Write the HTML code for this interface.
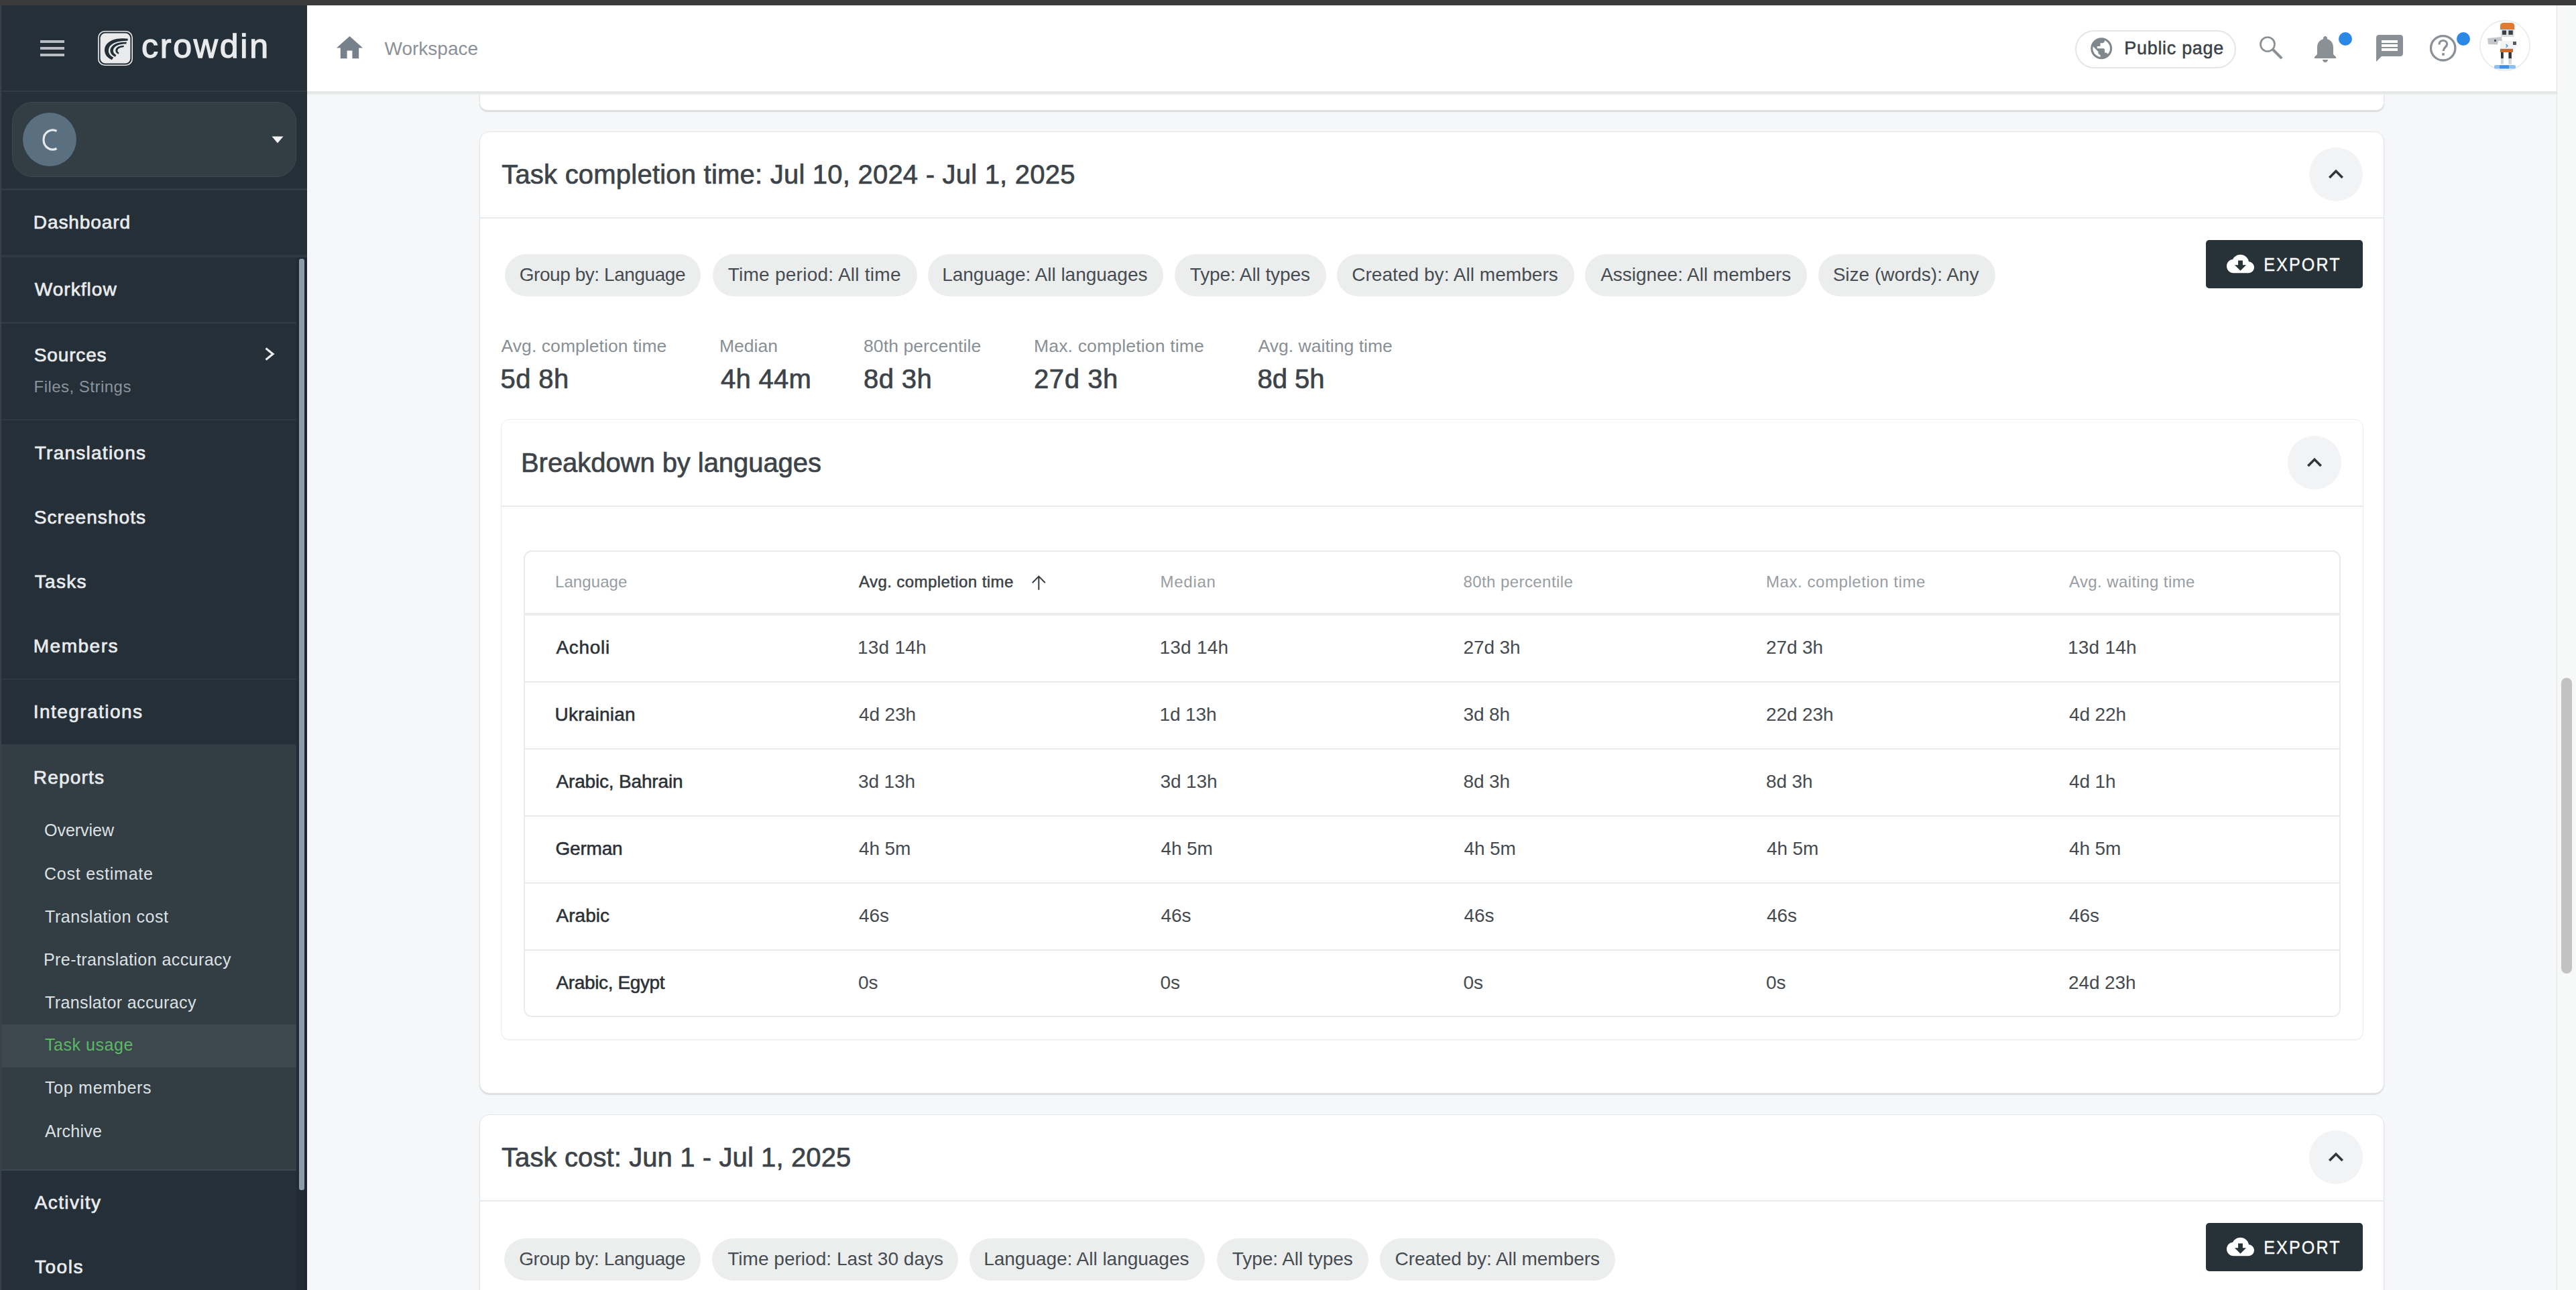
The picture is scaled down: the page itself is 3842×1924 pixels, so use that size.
<!DOCTYPE html>
<html><head><meta charset="utf-8">
<style>
html,body{margin:0;padding:0;}
body{width:3842px;height:1924px;position:relative;overflow:hidden;background:#f6f7f9;font-family:"Liberation Sans",sans-serif;}
.a{position:absolute;box-sizing:border-box;}
.t{position:absolute;white-space:pre;line-height:1;font-family:"Liberation Sans",sans-serif;}
svg{position:absolute;overflow:visible;}
.card{position:absolute;background:#fff;border:1px solid #e4e6e7;border-radius:15px;box-shadow:0 1.5px 1.5px rgba(0,0,0,0.11);box-sizing:border-box;}
.chip{position:absolute;background:#eceeee;border-radius:32px;height:63px;}
.btnc{position:absolute;width:80px;height:80px;border-radius:40px;background:#f2f3f4;}
.exp{position:absolute;left:3290px;width:234px;height:72px;border-radius:5px;background:#263238;}
.div{position:absolute;height:2px;background:#e9ebec;}
</style></head>
<body>
<!-- top dark bar -->

<div class="a" style="left:0;top:0;width:2px;height:1924px;background:#3b404a"></div>

<!-- SIDEBAR -->
<div class="a" style="left:2px;top:8px;width:456px;height:1916px;background:#242f38"></div>
<div class="a" style="left:2px;top:135px;width:456px;height:2px;background:#303b43"></div>
<!-- org selector -->
<div class="a" style="left:18px;top:152px;width:424px;height:112px;border-radius:30px;background:#323d44;border:1.5px solid #3d4a52"></div>
<div class="a" style="left:34px;top:168px;width:80px;height:80px;border-radius:40px;background:#5a6f80"></div>
<svg style="left:0;top:0" width="460" height="300"><path d="M84.5 195.5 A13.5 14.5 0 1 0 84.5 221.5" fill="none" stroke="#e6e9eb" stroke-width="3.2"/></svg>
<svg style="left:0;top:0" width="460" height="300"><path d="M405.5 203.5 L422.5 203.5 L414 213.5 Z" fill="#f4f5f6"/></svg>
<div class="a" style="left:2px;top:281px;width:456px;height:3px;background:#303b43"></div>

<!-- hamburger -->
<div class="a" style="left:60px;top:60px;width:36px;height:4px;background:#b7bdc2"></div>
<div class="a" style="left:60px;top:70px;width:36px;height:4px;background:#b7bdc2"></div>
<div class="a" style="left:60px;top:80px;width:36px;height:4px;background:#b7bdc2"></div>
<!-- crowdin logo icon -->
<svg style="left:146px;top:46px" width="52" height="52" viewBox="0 0 52 52">
  <rect x="0.8" y="0.8" width="50.4" height="50.4" rx="9.5" fill="none" stroke="#e8eaec" stroke-width="1.6"/>
  <rect x="3.6" y="3.6" width="44.8" height="44.8" rx="7.5" fill="#e8eaec"/>
  <g fill="#242f38">
    <path d="M45 11.8 C30 9.5 14 13.5 10.5 24.5 C8.3 32.5 12.5 40 21 43.2 L23.2 39.6 C17.2 37 14.8 32 16.4 26 C19 18.2 30 14.8 44.2 14.8 Z"/>
    <path d="M43 16.8 C31.5 16 21.5 19.5 18.8 26.8 C17.2 31.8 20 36.2 26 38.8 L27.4 36.1 C23.4 34.2 22.2 31 23.2 27.6 C25 22.2 32.5 19.6 42.2 19.6 Z"/>
    <path d="M39 22 C32.5 21.8 27.6 24 26.4 28 C25.7 31 27.3 33.4 30.6 34.8 L31.6 32.6 C29.6 31.6 29 30 29.5 28.5 C30.5 26 33.5 24.4 38.4 24.2 Z"/>
  </g>
</svg>
<!-- crowdin wordmark -->
<div class="t" style="left:211px;top:44px;font-size:50px;font-weight:400;color:#e8eaec;letter-spacing:2.8px;-webkit-text-stroke:1.3px #e8eaec">crowdin</div>

<!-- sidebar dividers -->
<div class="a" style="left:2px;top:380px;width:456px;height:4px;background:#2e3942"></div>
<div class="a" style="left:2px;top:480px;width:440px;height:3px;background:#2e3942"></div>
<div class="a" style="left:2px;top:625px;width:440px;height:2px;background:#2e3942"></div>
<div class="a" style="left:2px;top:1012px;width:440px;height:2px;background:#2e3942"></div>
<!-- Sources chevron -->
<svg style="left:0;top:0" width="460" height="600"><path d="M396.5 519.5 L407 528 L396.5 536.5" fill="none" stroke="#e9ebed" stroke-width="3.2"/></svg>
<!-- Reports group -->
<div class="a" style="left:2px;top:1110px;width:440px;height:635px;background:#323d44;border-top-right-radius:4px"></div>
<div class="a" style="left:2px;top:1744px;width:440px;height:2px;background:#3c484f"></div>
<div class="a" style="left:2px;top:1528px;width:440px;height:64px;background:#3c474e"></div>
<!-- sidebar scrollbar -->
<div class="a" style="left:442px;top:384px;width:16px;height:1540px;background:#222b34"></div>
<div class="a" style="left:454px;top:384px;width:4px;height:1540px;background:#1e2633"></div>
<div class="a" style="left:446px;top:386px;width:8px;height:1389px;border-radius:3px;background:#8b9cab"></div>

<!-- CARD 1 (partial) -->
<div class="card" style="left:715px;top:-40px;width:2841px;height:205px;border-radius:12px"></div>

<!-- CARD 2 -->
<div class="card" style="left:715px;top:196px;width:2841px;height:1435px"></div>
<div class="btnc" style="left:3444px;top:220px"></div>
<div class="div" style="left:716px;top:323.5px;width:2839px"></div>
<div class="exp" style="top:358px"></div>
<div class="chip" style="left:752.5px;top:378.5px;width:292.5px"></div>
<div class="chip" style="left:1062.5px;top:378.5px;width:305px"></div>
<div class="chip" style="left:1384px;top:378.5px;width:351px"></div>
<div class="chip" style="left:1751.5px;top:378.5px;width:226px"></div>
<div class="chip" style="left:1994px;top:378.5px;width:353.5px"></div>
<div class="chip" style="left:2364px;top:378.5px;width:331px"></div>
<div class="chip" style="left:2711.5px;top:378.5px;width:264.5px"></div>

<!-- breakdown card -->
<div class="card" style="left:747px;top:625px;width:2778px;height:926px;border-radius:13px;box-shadow:0 1px 1px rgba(0,0,0,0.05);border-color:#eceeee"></div>
<div class="btnc" style="left:3412px;top:650px"></div>
<div class="div" style="left:748px;top:753.5px;width:2776px"></div>
<!-- table -->
<div class="a" style="left:781px;top:821px;width:2710px;height:696px;border:2px solid #eaeced;border-radius:12px"></div>
<div class="a" style="left:783px;top:914px;width:2706px;height:4px;background:#eaeced"></div>
<div class="div" style="left:783px;top:1015.5px;width:2706px"></div>
<div class="div" style="left:783px;top:1115.5px;width:2706px"></div>
<div class="div" style="left:783px;top:1215.5px;width:2706px"></div>
<div class="div" style="left:783px;top:1315.5px;width:2706px"></div>
<div class="div" style="left:783px;top:1415.5px;width:2706px"></div>
<!-- sort arrow -->
<svg style="left:1530px;top:850px" width="40" height="40" viewBox="0 0 40 40"><path d="M19.3 9.5 V29.8 M9.8 19.2 L19.3 9.6 L28.8 19.2" fill="none" stroke="#353c42" stroke-width="2"/></svg>

<!-- CARD 3 -->
<div class="card" style="left:715px;top:1661.5px;width:2841px;height:400px"></div>
<div class="btnc" style="left:3444px;top:1686px"></div>
<div class="div" style="left:716px;top:1789.5px;width:2839px"></div>
<div class="exp" style="top:1824px"></div>
<div class="chip" style="left:752px;top:1847px;width:293px"></div>
<div class="chip" style="left:1062px;top:1847px;width:367px"></div>
<div class="chip" style="left:1446px;top:1847px;width:351px"></div>
<div class="chip" style="left:1814.5px;top:1847px;width:226.8px"></div>
<div class="chip" style="left:2058.3px;top:1847px;width:351.2px"></div>

<!-- chevrons (expand_less) -->
<svg style="left:3461.7px;top:237.5px" width="44" height="44" viewBox="0 0 24 24"><path d="M12 8l-6 6 1.41 1.41L12 10.83l4.59 4.58L18 14z" fill="#2f363b"/></svg>
<svg style="left:3430px;top:667.5px" width="44" height="44" viewBox="0 0 24 24"><path d="M12 8l-6 6 1.41 1.41L12 10.83l4.59 4.58L18 14z" fill="#2f363b"/></svg>
<svg style="left:3461.7px;top:1703.5px" width="44" height="44" viewBox="0 0 24 24"><path d="M12 8l-6 6 1.41 1.41L12 10.83l4.59 4.58L18 14z" fill="#2f363b"/></svg>
<!-- cloud download icons -->
<svg style="left:3321px;top:373.2px" width="41" height="41" viewBox="0 0 24 24"><path d="M19.35 10.04C18.67 6.59 15.64 4 12 4 9.11 4 6.6 5.64 5.35 8.04 2.34 8.36 0 10.91 0 14c0 3.31 2.69 6 6 6h13c2.76 0 5-2.24 5-5 0-2.64-2.05-4.78-4.65-4.96zM17 13l-5 5-5-5h3V9h4v4h3z" fill="#fff"/></svg>
<svg style="left:3321px;top:1839.2px" width="41" height="41" viewBox="0 0 24 24"><path d="M19.35 10.04C18.67 6.59 15.64 4 12 4 9.11 4 6.6 5.64 5.35 8.04 2.34 8.36 0 10.91 0 14c0 3.31 2.69 6 6 6h13c2.76 0 5-2.24 5-5 0-2.64-2.05-4.78-4.65-4.96zM17 13l-5 5-5-5h3V9h4v4h3z" fill="#fff"/></svg>

<!-- HEADER -->
<div class="a" style="left:458px;top:8px;width:3355px;height:128px;background:#fff"></div>
<div class="a" style="left:458px;top:136px;width:3355px;height:4px;background:#e6e8e8"></div>
<div class="a" style="left:458px;top:140px;width:3355px;height:3px;background:linear-gradient(#eef0f0,rgba(240,242,242,0))"></div>
<svg style="left:498px;top:48px" width="47" height="47" viewBox="0 0 24 24"><path d="M10 20v-6h4v6h5v-8h3L12 3 2 12h3v8z" fill="#77818b"/></svg>
<!-- public page chip -->
<div class="a" style="left:3094.5px;top:44.5px;width:240.5px;height:57px;border-radius:29px;border:2.5px solid #e4e6e8;background:#fff"></div>
<svg style="left:3114.6px;top:52.7px" width="38.4" height="38.4" viewBox="0 0 24 24"><path d="M12 2C6.48 2 2 6.48 2 12s4.48 10 10 10 10-4.48 10-10S17.52 2 12 2zm-1 17.93c-3.95-.49-7-3.85-7-7.93 0-.62.08-1.21.21-1.79L9 15v1c0 1.1.9 2 2 2v1.93zm6.9-2.54c-.26-.81-1-1.39-1.9-1.39h-1v-3c0-.55-.45-1-1-1H8v-2h2c.55 0 1-.45 1-1V7h2c1.1 0 2-.9 2-2v-.41c2.93 1.19 5 4.06 5 7.41 0 2.08-.8 3.97-2.1 5.39z" fill="#80878d"/></svg>
<!-- search -->
<svg style="left:3360px;top:44px" width="60" height="60" viewBox="0 0 60 60"><circle cx="22" cy="22" r="10.5" fill="none" stroke="#8a9096" stroke-width="2.7"/><path d="M29.5 29.5 L43.2 43.2" stroke="#8a9096" stroke-width="4" stroke-linecap="butt"/></svg>
<!-- bell -->
<svg style="left:3444px;top:48.5px" width="48" height="48" viewBox="0 0 24 24"><path d="M12 22c1.1 0 2-.9 2-2h-4c0 1.1.89 2 2 2zm6-6v-5c0-3.07-1.64-5.64-4.5-6.32V4c0-.83-.67-1.5-1.5-1.5s-1.5.67-1.5 1.5v.68C7.63 5.36 6 7.92 6 11v5l-2 2v1h16v-1l-2-2z" fill="#8a9096"/></svg>
<div class="a" style="left:3488px;top:48px;width:20px;height:20px;border-radius:10px;background:#2b88e4"></div>
<!-- message -->
<svg style="left:3540px;top:48px" width="48" height="48" viewBox="0 0 24 24"><path d="M20 2H4c-1.1 0-1.99.9-1.99 2L2 22l4-4h14c1.1 0 2-.9 2-2V4c0-1.1-.9-2-2-2zm-2 12H6v-2h12v2zm0-3H6V9h12v2zm0-3H6V6h12v2z" fill="#8a9096"/></svg>
<!-- help -->
<svg style="left:3610px;top:40px" width="70" height="70" viewBox="0 0 70 70"><circle cx="33.7" cy="31.8" r="18.2" fill="none" stroke="#8a9096" stroke-width="3.3"/><path d="M28 26.5 C28 22.5 30.5 20.5 33.8 20.5 C37.2 20.5 39.6 22.7 39.6 25.8 C39.6 30.2 34.2 30.5 34.2 36" fill="none" stroke="#8a9096" stroke-width="3.2"/><rect x="32.2" y="39.2" width="3.6" height="3.6" fill="#8a9096"/></svg>
<div class="a" style="left:3664px;top:48px;width:20px;height:20px;border-radius:10px;background:#2b88e4"></div>
<!-- avatar -->
<svg style="left:3698px;top:30px" width="76" height="76" viewBox="0 0 76 76">
  <circle cx="38" cy="38" r="37.2" fill="#fff" stroke="#e6e7e8" stroke-width="1.4"/>
  <path d="M31 14 L31 8.5 Q31 4 36 4 L47 4 Q52.3 4 52.3 8.5 L52.3 14 Z" fill="#e07a30"/>
  <rect x="32" y="14" width="19.7" height="11" fill="#dcdfe2"/>
  <rect x="34" y="15.4" width="6" height="6.4" fill="#3a3f45"/><rect x="43.4" y="15.4" width="6.4" height="6.4" fill="#3a3f45"/>
  <path d="M12 27 L33 25 L34 31 L28 31 L27 36.4 L13 36 Z" fill="#c4c8cc"/>
  <rect x="22" y="29" width="3" height="3" fill="#4a4f55"/>
  <rect x="31" y="31" width="22.5" height="12.4" fill="#f3f4f5"/>
  <rect x="50" y="32" width="5" height="5" fill="#555b61"/>
  <path d="M39.5 36 L42 38.5 L39.5 40.5" fill="none" stroke="#3b8fe0" stroke-width="1.2"/>
  <rect x="31" y="42.8" width="19" height="5.1" fill="#c96a2c"/>
  <rect x="32" y="47.9" width="3.8" height="9.5" fill="#2f3640"/><rect x="43.4" y="47.9" width="4.5" height="9.5" fill="#2f3640"/>
  <rect x="32" y="57.4" width="3.8" height="8.3" fill="#d5d8db"/><rect x="43.4" y="57.4" width="4.5" height="8.3" fill="#d5d8db"/>
  <rect x="22" y="67" width="32" height="5.5" rx="2" fill="#8cc0f0"/>
  <rect x="30" y="67.3" width="14" height="5" fill="#3d92e6"/>
</svg>

<!-- page scrollbar -->
<div class="a" style="left:3813px;top:8px;width:29px;height:1916px;background:#f7f8f8;border-left:1.5px solid #e3e4e5"></div>
<div class="a" style="left:3820px;top:1011px;width:16px;height:441px;border-radius:8px;background:#c2c2c2"></div>

<div class="t" style="left:49.8px;top:318.3px;font-size:28px;color:#e9ebed;letter-spacing:0.91px;-webkit-text-stroke:0.7px #e9ebed">Dashboard</div>
<div class="t" style="left:51.8px;top:418.3px;font-size:28px;color:#e9ebed;letter-spacing:1.04px;-webkit-text-stroke:0.7px #e9ebed">Workflow</div>
<div class="t" style="left:50.8px;top:515.8px;font-size:28px;color:#e9ebed;letter-spacing:0.85px;-webkit-text-stroke:0.7px #e9ebed">Sources</div>
<div class="t" style="left:51.8px;top:662.3px;font-size:28px;color:#e9ebed;letter-spacing:1.25px;-webkit-text-stroke:0.7px #e9ebed">Translations</div>
<div class="t" style="left:50.8px;top:758.3px;font-size:28px;color:#e9ebed;letter-spacing:1.06px;-webkit-text-stroke:0.7px #e9ebed">Screenshots</div>
<div class="t" style="left:51.8px;top:853.8px;font-size:28px;color:#e9ebed;letter-spacing:1.28px;-webkit-text-stroke:0.7px #e9ebed">Tasks</div>
<div class="t" style="left:49.8px;top:950.3px;font-size:28px;color:#e9ebed;letter-spacing:1.50px;-webkit-text-stroke:0.7px #e9ebed">Members</div>
<div class="t" style="left:49.8px;top:1048.3px;font-size:28px;color:#e9ebed;letter-spacing:1.44px;-webkit-text-stroke:0.7px #e9ebed">Integrations</div>
<div class="t" style="left:49.8px;top:1146.3px;font-size:28px;color:#e9ebed;letter-spacing:1.19px;-webkit-text-stroke:0.7px #e9ebed">Reports</div>
<div class="t" style="left:51.8px;top:1780.3px;font-size:28px;color:#e9ebed;letter-spacing:1.36px;-webkit-text-stroke:0.7px #e9ebed">Activity</div>
<div class="t" style="left:51.8px;top:1875.8px;font-size:28px;color:#e9ebed;letter-spacing:1.58px;-webkit-text-stroke:0.7px #e9ebed">Tools</div>
<div class="t" style="left:50.5px;top:565.4px;font-size:24px;color:#8b949b;letter-spacing:0.48px">Files, Strings</div>
<div class="t" style="left:66.0px;top:1226.3px;font-size:25px;color:#dde1e3;letter-spacing:-0.02px">Overview</div>
<div class="t" style="left:66.0px;top:1290.8px;font-size:25px;color:#dde1e3;letter-spacing:0.76px">Cost estimate</div>
<div class="t" style="left:67.0px;top:1354.8px;font-size:25px;color:#dde1e3;letter-spacing:0.56px">Translation cost</div>
<div class="t" style="left:65.0px;top:1418.8px;font-size:25px;color:#dde1e3;letter-spacing:0.43px">Pre-translation accuracy</div>
<div class="t" style="left:67.0px;top:1482.8px;font-size:25px;color:#dde1e3;letter-spacing:0.38px">Translator accuracy</div>
<div class="t" style="left:67.0px;top:1546.3px;font-size:25px;color:#5cb865;letter-spacing:0.55px">Task usage</div>
<div class="t" style="left:67.0px;top:1609.8px;font-size:25px;color:#dde1e3;letter-spacing:0.71px">Top members</div>
<div class="t" style="left:67.0px;top:1674.8px;font-size:25px;color:#dde1e3;letter-spacing:0.26px">Archive</div>
<div class="t" style="left:573.5px;top:58.6px;font-size:28px;color:#8a9198;letter-spacing:0.00px">Workspace</div>
<div class="t" style="left:3168.3px;top:58.6px;font-size:27px;color:#3a4147;letter-spacing:0.69px;-webkit-text-stroke:0.5px #3a4147">Public page</div>
<div class="t" style="left:748.2px;top:239.6px;font-size:40px;color:#3c4349;letter-spacing:0.22px;-webkit-text-stroke:0.7px #3c4349">Task completion time: Jul 10, 2024 - Jul 1, 2025</div>
<div class="t" style="left:774.7px;top:396.0px;font-size:28px;color:#454c52;letter-spacing:-0.44px">Group by: Language</div>
<div class="t" style="left:1085.7px;top:396.0px;font-size:28px;color:#454c52;letter-spacing:0.26px">Time period: All time</div>
<div class="t" style="left:1405.2px;top:396.0px;font-size:28px;color:#454c52;letter-spacing:-0.02px">Language: All languages</div>
<div class="t" style="left:1774.7px;top:396.0px;font-size:28px;color:#454c52;letter-spacing:-0.09px">Type: All types</div>
<div class="t" style="left:2016.2px;top:396.0px;font-size:28px;color:#454c52;letter-spacing:0.05px">Created by: All members</div>
<div class="t" style="left:2387.2px;top:396.0px;font-size:28px;color:#454c52;letter-spacing:-0.03px">Assignee: All members</div>
<div class="t" style="left:2733.7px;top:396.0px;font-size:28px;color:#454c52;letter-spacing:-0.01px">Size (words): Any</div>
<div class="t" style="left:747.5px;top:502.6px;font-size:26.5px;color:#888f95;letter-spacing:0.07px">Avg. completion time</div>
<div class="t" style="left:746.5px;top:544.6px;font-size:40px;color:#3c4349;letter-spacing:0.41px;-webkit-text-stroke:0.7px #3c4349">5d 8h</div>
<div class="t" style="left:1073.0px;top:502.6px;font-size:26.5px;color:#888f95;letter-spacing:0.00px">Median</div>
<div class="t" style="left:1075.0px;top:544.6px;font-size:40px;color:#3c4349;letter-spacing:0.28px;-webkit-text-stroke:0.7px #3c4349">4h 44m</div>
<div class="t" style="left:1288.0px;top:502.6px;font-size:26.5px;color:#888f95;letter-spacing:0.10px">80th percentile</div>
<div class="t" style="left:1288.0px;top:544.6px;font-size:40px;color:#3c4349;letter-spacing:0.41px;-webkit-text-stroke:0.7px #3c4349">8d 3h</div>
<div class="t" style="left:1542.0px;top:502.6px;font-size:26.5px;color:#888f95;letter-spacing:0.18px">Max. completion time</div>
<div class="t" style="left:1542.0px;top:544.6px;font-size:40px;color:#3c4349;letter-spacing:0.58px;-webkit-text-stroke:0.7px #3c4349">27d 3h</div>
<div class="t" style="left:1876.5px;top:502.6px;font-size:26.5px;color:#888f95;letter-spacing:0.03px">Avg. waiting time</div>
<div class="t" style="left:1875.5px;top:544.6px;font-size:40px;color:#3c4349;letter-spacing:0.00px;-webkit-text-stroke:0.7px #3c4349">8d 5h</div>
<div class="t" style="left:777.0px;top:670.1px;font-size:40px;color:#3c4349;letter-spacing:-0.06px;-webkit-text-stroke:0.7px #3c4349">Breakdown by languages</div>
<div class="t" style="left:828.0px;top:856.2px;font-size:24px;color:#979da2;letter-spacing:0.08px">Language</div>
<div class="t" style="left:1281.0px;top:856.2px;font-size:24px;color:#3a4147;letter-spacing:0.42px;-webkit-text-stroke:0.5px #3a4147">Avg. completion time</div>
<div class="t" style="left:1730.5px;top:856.2px;font-size:24px;color:#979da2;letter-spacing:0.73px">Median</div>
<div class="t" style="left:2182.5px;top:856.2px;font-size:24px;color:#979da2;letter-spacing:0.42px">80th percentile</div>
<div class="t" style="left:2634.0px;top:856.2px;font-size:24px;color:#979da2;letter-spacing:0.56px">Max. completion time</div>
<div class="t" style="left:3086.0px;top:856.2px;font-size:24px;color:#979da2;letter-spacing:0.40px">Avg. waiting time</div>
<div class="t" style="left:829.5px;top:952.3px;font-size:28px;color:#2b3136;letter-spacing:0.69px;-webkit-text-stroke:0.55px #2b3136">Acholi</div>
<div class="t" style="left:1279.0px;top:952.3px;font-size:28px;color:#454b50;letter-spacing:0.23px">13d 14h</div>
<div class="t" style="left:1729.5px;top:952.3px;font-size:28px;color:#454b50;letter-spacing:0.23px">13d 14h</div>
<div class="t" style="left:2182.5px;top:952.3px;font-size:28px;color:#454b50;letter-spacing:-0.10px">27d 3h</div>
<div class="t" style="left:2634.0px;top:952.3px;font-size:28px;color:#454b50;letter-spacing:-0.10px">27d 3h</div>
<div class="t" style="left:3084.0px;top:952.3px;font-size:28px;color:#454b50;letter-spacing:0.23px">13d 14h</div>
<div class="t" style="left:827.5px;top:1052.3px;font-size:28px;color:#2b3136;letter-spacing:0.22px;-webkit-text-stroke:0.55px #2b3136">Ukrainian</div>
<div class="t" style="left:1281.0px;top:1052.3px;font-size:28px;color:#454b50;letter-spacing:-0.10px">4d 23h</div>
<div class="t" style="left:1729.5px;top:1052.3px;font-size:28px;color:#454b50;letter-spacing:-0.10px">1d 13h</div>
<div class="t" style="left:2182.5px;top:1052.3px;font-size:28px;color:#454b50;letter-spacing:-0.10px">3d 8h</div>
<div class="t" style="left:2634.0px;top:1052.3px;font-size:28px;color:#454b50;letter-spacing:-0.10px">22d 23h</div>
<div class="t" style="left:3086.0px;top:1052.3px;font-size:28px;color:#454b50;letter-spacing:-0.10px">4d 22h</div>
<div class="t" style="left:829.5px;top:1152.3px;font-size:28px;color:#2b3136;letter-spacing:-0.17px;-webkit-text-stroke:0.55px #2b3136">Arabic, Bahrain</div>
<div class="t" style="left:1280.0px;top:1152.3px;font-size:28px;color:#454b50;letter-spacing:-0.10px">3d 13h</div>
<div class="t" style="left:1730.5px;top:1152.3px;font-size:28px;color:#454b50;letter-spacing:-0.10px">3d 13h</div>
<div class="t" style="left:2182.5px;top:1152.3px;font-size:28px;color:#454b50;letter-spacing:-0.10px">8d 3h</div>
<div class="t" style="left:2634.0px;top:1152.3px;font-size:28px;color:#454b50;letter-spacing:-0.10px">8d 3h</div>
<div class="t" style="left:3086.0px;top:1152.3px;font-size:28px;color:#454b50;letter-spacing:-0.10px">4d 1h</div>
<div class="t" style="left:828.5px;top:1252.3px;font-size:28px;color:#2b3136;letter-spacing:-0.21px;-webkit-text-stroke:0.55px #2b3136">German</div>
<div class="t" style="left:1281.0px;top:1252.3px;font-size:28px;color:#454b50;letter-spacing:-0.10px">4h 5m</div>
<div class="t" style="left:1731.5px;top:1252.3px;font-size:28px;color:#454b50;letter-spacing:-0.10px">4h 5m</div>
<div class="t" style="left:2183.5px;top:1252.3px;font-size:28px;color:#454b50;letter-spacing:-0.10px">4h 5m</div>
<div class="t" style="left:2635.0px;top:1252.3px;font-size:28px;color:#454b50;letter-spacing:-0.10px">4h 5m</div>
<div class="t" style="left:3086.0px;top:1252.3px;font-size:28px;color:#454b50;letter-spacing:-0.10px">4h 5m</div>
<div class="t" style="left:829.5px;top:1352.3px;font-size:28px;color:#2b3136;letter-spacing:0.03px;-webkit-text-stroke:0.55px #2b3136">Arabic</div>
<div class="t" style="left:1281.0px;top:1352.3px;font-size:28px;color:#454b50;letter-spacing:-0.10px">46s</div>
<div class="t" style="left:1731.5px;top:1352.3px;font-size:28px;color:#454b50;letter-spacing:-0.10px">46s</div>
<div class="t" style="left:2183.5px;top:1352.3px;font-size:28px;color:#454b50;letter-spacing:-0.10px">46s</div>
<div class="t" style="left:2635.0px;top:1352.3px;font-size:28px;color:#454b50;letter-spacing:-0.10px">46s</div>
<div class="t" style="left:3086.0px;top:1352.3px;font-size:28px;color:#454b50;letter-spacing:-0.10px">46s</div>
<div class="t" style="left:829.5px;top:1452.3px;font-size:28px;color:#2b3136;letter-spacing:-0.37px;-webkit-text-stroke:0.55px #2b3136">Arabic, Egypt</div>
<div class="t" style="left:1280.0px;top:1452.3px;font-size:28px;color:#454b50;letter-spacing:-0.10px">0s</div>
<div class="t" style="left:1730.5px;top:1452.3px;font-size:28px;color:#454b50;letter-spacing:-0.10px">0s</div>
<div class="t" style="left:2182.5px;top:1452.3px;font-size:28px;color:#454b50;letter-spacing:-0.10px">0s</div>
<div class="t" style="left:2634.0px;top:1452.3px;font-size:28px;color:#454b50;letter-spacing:-0.10px">0s</div>
<div class="t" style="left:3085.0px;top:1452.3px;font-size:28px;color:#454b50;letter-spacing:-0.10px">24d 23h</div>
<div class="t" style="left:3376.0px;top:380.8px;font-size:28px;color:#ffffff;letter-spacing:2.40px;-webkit-text-stroke:0.35px #ffffff;transform:scaleX(0.8954);transform-origin:2.0px 0">EXPORT</div>
<div class="t" style="left:3376.0px;top:1846.8px;font-size:28px;color:#ffffff;letter-spacing:2.40px;-webkit-text-stroke:0.35px #ffffff;transform:scaleX(0.8954);transform-origin:2.0px 0">EXPORT</div>
<div class="t" style="left:748.0px;top:1706.1px;font-size:40px;color:#3c4349;letter-spacing:0.11px;-webkit-text-stroke:0.7px #3c4349">Task cost: Jun 1 - Jul 1, 2025</div>
<div class="t" style="left:774.2px;top:1864.3px;font-size:28px;color:#454c52;letter-spacing:-0.41px">Group by: Language</div>
<div class="t" style="left:1085.2px;top:1864.3px;font-size:28px;color:#454c52;letter-spacing:0.03px">Time period: Last 30 days</div>
<div class="t" style="left:1467.2px;top:1864.3px;font-size:28px;color:#454c52;letter-spacing:-0.02px">Language: All languages</div>
<div class="t" style="left:1837.7px;top:1864.3px;font-size:28px;color:#454c52;letter-spacing:-0.03px">Type: All types</div>
<div class="t" style="left:2080.5px;top:1864.3px;font-size:28px;color:#454c52;letter-spacing:-0.05px">Created by: All members</div>
<div class="a" style="left:0;top:0;width:3842px;height:8px;background:#3b3b3b;z-index:20"></div>
</body></html>
